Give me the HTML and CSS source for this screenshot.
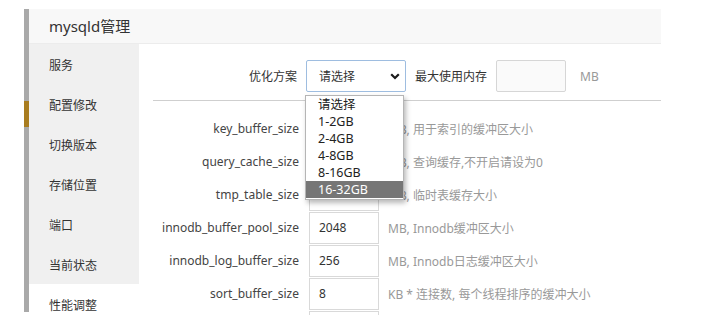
FILE: index.html
```html
<!DOCTYPE html>
<html lang="zh">
<head>
<meta charset="utf-8">
<link rel="stylesheet" href="styles.css">
</head>
<body>
<div class="page">
  <div class="strip"><div class="strip-mark"></div></div>
  <div class="panel">
    <div class="title">mysqld管理</div>
    <div class="body">
      <ul class="side">
        <li>服务</li>
        <li>配置修改</li>
        <li>切换版本</li>
        <li>存储位置</li>
        <li>端口</li>
        <li>当前状态</li>
        <li class="active">性能调整</li>
      </ul>
      <div class="content">
        <div class="toprow">
          <span class="tlabel">优化方案</span>
          <div class="selwrap">
            <div class="select"><span>请选择</span>
              <svg class="chev" width="10" height="7" viewBox="0 0 10 7"><path d="M1.2 1.2 L5 5 L8.8 1.2" fill="none" stroke="#1a1a1a" stroke-width="2.2"/></svg>
            </div>
            <ul class="options">
              <li>请选择</li>
              <li>1-2GB</li>
              <li>2-4GB</li>
              <li>4-8GB</li>
              <li>8-16GB</li>
              <li class="hl">16-32GB</li>
            </ul>
          </div>
          <span class="tlabel">最大使用内存</span>
          <div class="tinput"></div>
          <span class="unit">MB</span>
        </div>
        <div class="rows">
          <div class="row"><span class="lab">key_buffer_size</span><div class="inp"></div><span class="desc">MB, 用于索引的缓冲区大小</span></div>
          <div class="row"><span class="lab">query_cache_size</span><div class="inp"></div><span class="desc">MB, 查询缓存,不开启请设为0</span></div>
          <div class="row"><span class="lab">tmp_table_size</span><div class="inp"></div><span class="desc">MB, 临时表缓存大小</span></div>
          <div class="row"><span class="lab">innodb_buffer_pool_size</span><div class="inp">2048</div><span class="desc">MB, Innodb缓冲区大小</span></div>
          <div class="row"><span class="lab">innodb_log_buffer_size</span><div class="inp">256</div><span class="desc">MB, Innodb日志缓冲区大小</span></div>
          <div class="row"><span class="lab">sort_buffer_size</span><div class="inp">8</div><span class="desc">KB * 连接数, 每个线程排序的缓冲大小</span></div>
          <div class="row"><span class="lab"></span><div class="inp"></div></div>
        </div>
      </div>
    </div>
  </div>
</div>
</body>
</html>
```
FILE: styles.css
```css
* { box-sizing: border-box; }
html, body { margin: 0; padding: 0; background: #fff; overflow: hidden; }
body {
  width: 707px; height: 325px;
  font-family: "Noto Sans", "Noto Sans CJK SC", sans-serif;
  font-size: 12px; color: #333;
}
.page { display: flex; padding-left: 24px; }
.strip {
  width: 5px; height: 303px; margin-top: 9px;
  background: #a9a9a9;
  padding-top: 92px;
}
.strip-mark { height: 26px; background: #a87c1f; }
.panel {
  width: 632px; margin-top: 9px; height: 306px;
  display: flex; flex-direction: column; overflow: hidden;
}
.title {
  height: 35px; background: #f8f8f8; border-bottom: 1px solid #ececec;
  padding-left: 20px; font-size: 15px; line-height: 34px; color: #333; flex: none;
}
.body { display: flex; flex: 1; overflow: hidden; }
.side {
  list-style: none; margin: 0; padding: 2px 0 0; width: 110px;
  background: #f0f0f0; flex: none;
}
.side li { height: 40px; line-height: 40px; padding-left: 20px; font-size: 12px; color: #333; }
.side li.active { background: #fff; margin-top: -2px; padding-top: 2px; }
.content { flex: 1; padding: 16px 0 0 14px; }
.toprow {
  display: flex; align-items: center; height: 32px;
  padding-left: 96px; gap: 9px;
}
.tlabel { color: #333; }
.selwrap { position: relative; }
.select {
  width: 100px; height: 32px; border: 1px solid #9ebde0; border-radius: 2px;
  display: flex; align-items: center; justify-content: space-between;
  padding: 0 5px 0 12px; background: #fff;
}
.chev { display: block; }
.options {
  position: absolute; left: -1px; top: 35px; width: 99px; z-index: 5;
  list-style: none; margin: 0; padding: 0 0 1px;
  background: #fff; border: 1px solid #b5b5b5;
  box-shadow: 2px 3px 5px rgba(0,0,0,0.28);
}
.options li { height: 17px; line-height: 17px; padding-left: 12px; font-size: 12.5px; color: #222; }
.options li.hl { background: #767676; color: #fff; }
.tinput { width: 70px; height: 32px; border: 1px solid #d6d6d6; border-radius: 2px; background: #fafafa; }
.unit { color: #999; margin-left: 5px; }
.rows { border-top: 1px solid #cfcfcf; margin-top: 8px; padding-top: 11px; }
.row { display: flex; align-items: center; height: 33px; }
.lab { width: 146px; text-align: right; color: #444; flex: none; }
.inp {
  width: 70px; height: 32px; margin-left: 10px; border: 1px solid #d9d9d9;
  padding-left: 9px; line-height: 30px; color: #333; flex: none;
}
.desc { margin-left: 9px; color: #999; }
```
